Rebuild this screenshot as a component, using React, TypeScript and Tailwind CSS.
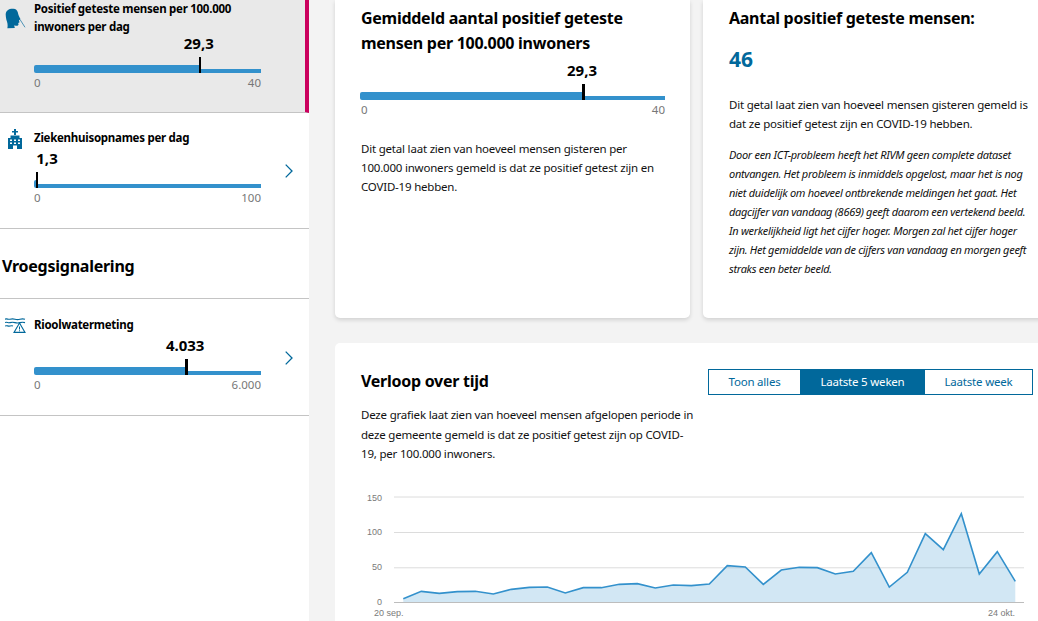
const font = '"Noto Sans", "Open Sans", sans-serif';

function HeadIcon() {
  return (
    <svg viewBox="15 20 62 68" className="w-[21px] h-[23px] shrink-0">
      <path d="M17 42 C17 30 28 24 40 25 C47 25 51 29 53 36 C54 42 56 47 61 56 L56 60 L58 65 L54 67 L55 72 C54 76 50 76 44 75 L42 75 L44 82 L22 83 C24 74 22 66 19 58 C18 52 17 47 17 42Z" fill="#01689b" />
      <path d="M60 58 L74 80" stroke="#01689b" strokeWidth="2" fill="none" />
    </svg>
  );
}
function HospitalIcon() {
  return (
    <svg viewBox="0 0 14 20" className="w-[14px] h-[20px] shrink-0">
      <path d="M6 0h2v2h2v1.6H8V6H6V3.6H4V2h2z" fill="#01689b" />
      <path fillRule="evenodd" fill="#01689b" d="M2.5 6.5h9V9H14v11H9v-3.5H5V20H0V9h2.5zM2 10.5v1.6h2v-1.6zM6 10.5v1.6h2v-1.6zM10 10.5v1.6h2v-1.6zM2 13.5v1.6h2v-1.6zM6 13.5v1.6h2v-1.6zM10 13.5v1.6h2v-1.6z" />
    </svg>
  );
}
function SewerIcon() {
  return (
    <svg viewBox="0 0 21 15" className="w-[21px] h-[15px] shrink-0" fill="none" stroke="#01689b">
      <path d="M0 1.2c2-1 3 .6 5 0s3-.6 5 0 3 .6 5 0 3-.6 5 0" strokeWidth="1.1" />
      <path d="M0 4.6c2-1 3 .6 5 0s3-.6 5 0 3 .6 5 0 3-.6 5 0" strokeWidth="1.1" />
      <path d="M0 8c2-1 3 .6 5 0 1.4-.4 2.2-.4 3 0" strokeWidth="1.1" />
      <path d="M14.5 5 L20 14.4 H9 Z" fill="#fff" strokeWidth="1.1" />
      <path d="M14.5 8.5v3M14.5 12.3v1" strokeWidth="1" />
    </svg>
  );
}
function Chevron() {
  return (
    <svg viewBox="0 0 8 14" className="w-[8px] h-[14px]" fill="none" stroke="#01689b" strokeWidth="1.3">
      <path d="M.7 .6 L7 7 L.7 13.4" />
    </svg>
  );
}

function Bar({ value, max, pct, labelOffset, markerW, wide }: { value: string; max: string; pct: number; labelOffset?: number; markerW: number; wide?: boolean }) {
  return (
    <div className={wide ? "w-[305px]" : "w-[227px]"}>
      <div className="relative h-[24px]">
        <span
          className="absolute top-[-1px] text-[15px] leading-[22px] font-bold text-black whitespace-nowrap -translate-x-1/2"
          style={{ left: labelOffset ?? `${pct}%` }}
        >
          {value}
        </span>
      </div>
      <div className="relative h-[16px] flex items-end">
        <div className="h-[8px] bg-[#3391cc] rounded-l-[2px]" style={{ width: `${pct}%` }} />
        <div className="h-[4px] bg-[#3391cc] flex-1" />
        <div className="absolute top-0 h-[16px] bg-black" style={{ left: `${pct}%`, width: markerW }} />
      </div>
      <div className={`flex justify-between text-[11.5px] leading-[20px] text-[#777] ${wide ? "pl-[1px]" : ""}`}>
        <span>0</span>
        <span>{max}</span>
      </div>
    </div>
  );
}

function Row({ icon, iconBox, title, children, className, chevron, top }: any) {
  return (
    <div className={`flex border-b border-[#c4c4c4] pl-[5px] ${className}`}>
      <div className={`w-[29px] shrink-0 ${iconBox}`}>{icon}</div>
      <div className="w-[251px] shrink-0" style={{ paddingTop: top }}>
        <div className="text-[11.5px] leading-[18px] font-bold text-black tracking-[-0.27px] whitespace-nowrap">{title}</div>
        {children}
      </div>
      {chevron && <div className="flex items-end pb-[50px] shrink-0"><Chevron /></div>}
    </div>
  );
}

const vals = [353,331,337,332,331,339,325,319,318,336,320,320,310,308,321,312,314,309,254,258,310,267,259,260,279,271,215,318,274,158,206,98,279,212,301];
const pts = vals.map((v, i) => [403.3 + i * 18, 480 + v / 3] as const);
const line = pts.map(p => `${p[0]},${p[1]}`).join(" ");
const area = `403.3,601.3 ${line} 1015.3,601.3`;

function Chart() {
  return (
    <svg viewBox="361 485 680 136" className="w-[680px] h-[136px] block">
      {[496, 531.5, 566.8].map(y => <line key={y} x1="394" x2="1024" y1={y} y2={y} stroke="#dcdcdc" strokeWidth="1" />)}
      <polygon points={area} fill="#3391cc" fillOpacity="0.22" />
      <polyline points={line} fill="none" stroke="#3391cc" strokeWidth="1.6" />
      <line x1="394" x2="1024" y1="601.5" y2="601.5" stroke="#bdbdbd" strokeWidth="1" />
      <g fontFamily='"Liberation Sans", sans-serif' fontSize="9" fill="#7a7a7a">
        <text x="382" y="500" textAnchor="end">150</text>
        <text x="382" y="534" textAnchor="end">100</text>
        <text x="382" y="569" textAnchor="end">50</text>
        <text x="382" y="604" textAnchor="end">0</text>
        <text x="374" y="615">20 sep.</text>
        <text x="988" y="615">24 okt.</text>
      </g>
    </svg>
  );
}

const bodyText = "text-[11.5px] tracking-[-0.2px] text-[#111] whitespace-nowrap";
const heading = "text-[16px] leading-[25px] font-bold text-black whitespace-nowrap tracking-[-0.27px]";

export default function App() {
  return (
    <div className="h-[621px] w-[1038px] overflow-hidden flex bg-[#f3f3f3]" style={{ fontFamily: font }}>
      <aside className="w-[309px] shrink-0 bg-white h-full">
        <Row
          icon={<HeadIcon />}
          iconBox="pt-[7px]"
          title={<>Positief geteste mensen per 100.000<br />inwoners per dag</>}
          className="h-[113px] bg-[#e9e9e9] border-r-[4px] border-r-[#ca005d]"
          top={-1}
        >
          <div className="mt-[-3px]"><Bar value="29,3" max="40" pct={72.6} markerW={2} /></div>
        </Row>
        <Row
          icon={<HospitalIcon />}
          iconBox="pt-[16px] pl-[3px]"
          title="Ziekenhuisopnames per dag"
          className="h-[116px]"
          chevron
          top={16}
        >
          <div className="mt-[1px]"><Bar value="1,3" max="100" pct={1} labelOffset={13} markerW={2} /></div>
        </Row>
        <div className="h-[70px] border-b border-[#c4c4c4] flex items-center pl-[2px] text-[16px] tracking-[-0.25px] font-bold text-black pt-[5px]">
          Vroegsignalering
        </div>
        <Row
          icon={<SewerIcon />}
          iconBox="pt-[19px]"
          title="Rioolwatermeting"
          className="h-[117px]"
          chevron
          top={17}
        >
          <div className="mt-[1px]"><Bar value="4.033" max="6.000" pct={66.6} markerW={3} /></div>
        </Row>
      </aside>

      <main className="flex-1 min-w-0 pl-[26px] overflow-hidden">
        <div className="flex gap-[13px] w-[760px]">
          <section className="w-[355px] h-[318px] shrink-0 bg-white rounded-b-[5px] shadow-[0_2px_4px_rgba(0,0,0,0.14)] pl-[26px] pr-[20px] pt-[6px]">
            <h2 className={heading}>
              Gemiddeld aantal positief geteste<br />mensen per 100.000 inwoners
            </h2>
            <div className="mt-[4px] ml-[-1px]">
              <Bar value="29,3" max="40" pct={72.8} markerW={3} wide />
            </div>
            <p className={`${bodyText} leading-[19px] mt-[19px]`}>
              Dit getal laat zien van hoeveel mensen gisteren per<br />
              100.000 inwoners gemeld is dat ze positief getest zijn en<br />
              COVID-19 hebben.
            </p>
          </section>
          <section className="flex-1 h-[318px] bg-white rounded-b-[5px] shadow-[0_2px_4px_rgba(0,0,0,0.14)] pl-[26px] pt-[6px]">
            <h2 className={heading}>Aantal positief geteste mensen:</h2>
            <div className="text-[21px] leading-[30px] font-bold text-[#01689b] mt-[13px]">46</div>
            <p className={`${bodyText} leading-[19px] mt-[21px]`}>
              Dit getal laat zien van hoeveel mensen gisteren gemeld is<br />
              dat ze positief getest zijn en COVID-19 hebben.
            </p>
            <p className="text-[11px] leading-[19px] italic text-[#111] mt-[12px] whitespace-nowrap tracking-[-0.3px]">
              Door een ICT-probleem heeft het RIVM geen complete dataset<br />
              ontvangen. Het probleem is inmiddels opgelost, maar het is nog<br />
              niet duidelijk om hoeveel ontbrekende meldingen het gaat. Het<br />
              dagcijfer van vandaag (8669) geeft daarom een vertekend beeld.<br />
              In werkelijkheid ligt het cijfer hoger. Morgen zal het cijfer hoger<br />
              zijn. Het gemiddelde van de cijfers van vandaag en morgen geeft<br />
              straks een beter beeld.
            </p>
          </section>
        </div>

        <section className="w-[760px] h-[300px] mt-[25px] bg-white rounded-t-[5px] pl-[26px] pt-[26px]">
          <div className="flex items-start w-[672px] justify-between">
            <h2 className={heading}>Verloop over tijd</h2>
            <div className="flex h-[26px] border border-[#01689b] text-[11.5px] tracking-[-0.2px] text-[#01689b] w-[325px]">
              <div className="w-[91px] flex items-center justify-center">Toon alles</div>
              <div className="w-[125px] flex items-center justify-center bg-[#01689b] text-white">Laatste 5 weken</div>
              <div className="flex-1 flex items-center justify-center">Laatste week</div>
            </div>
          </div>
          <p className={`${bodyText} leading-[19.5px] mt-[10px]`}>
            Deze grafiek laat zien van hoeveel mensen afgelopen periode in<br />
            deze gemeente gemeld is dat ze positief getest zijn op COVID-<br />
            19, per 100.000 inwoners.
          </p>
          <div className="mt-[22px]"><Chart /></div>
        </section>
      </main>
    </div>
  );
}
